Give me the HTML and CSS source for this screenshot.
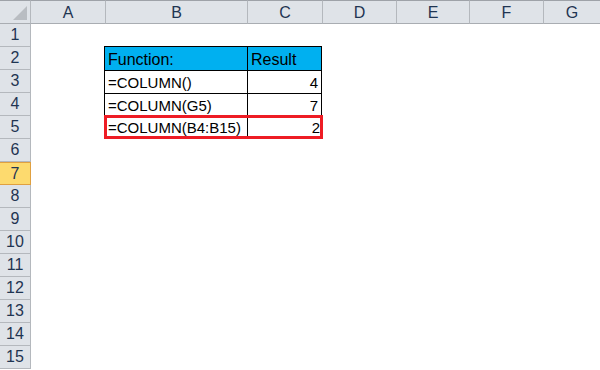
FILE: index.html
```html
<!DOCTYPE html>
<html lang="en">
<head>
    <meta charset="UTF-8">
    <meta name="viewport" content="width=device-width, initial-scale=1.0">
    <title>COLUMN function</title>
    <link rel="stylesheet" href="styles.css">
</head>
<body>
    <div class="sheet">
        <div class="col-head corner"><span class="tri"></span></div>
        <div class="col-head">A</div>
        <div class="col-head">B</div>
        <div class="col-head">C</div>
        <div class="col-head">D</div>
        <div class="col-head">E</div>
        <div class="col-head">F</div>
        <div class="col-head last">G</div>

        <div class="row-num" style="grid-row: 2">1</div>
        <div class="row-num" style="grid-row: 3">2</div>
        <div class="row-num" style="grid-row: 4">3</div>
        <div class="row-num" style="grid-row: 5">4</div>
        <div class="row-num" style="grid-row: 6">5</div>
        <div class="row-num" style="grid-row: 7">6</div>
        <div class="row-num active" style="grid-row: 8">7</div>
        <div class="row-num" style="grid-row: 9">8</div>
        <div class="row-num" style="grid-row: 10">9</div>
        <div class="row-num" style="grid-row: 11">10</div>
        <div class="row-num" style="grid-row: 12">11</div>
        <div class="row-num" style="grid-row: 13">12</div>
        <div class="row-num" style="grid-row: 14">13</div>
        <div class="row-num" style="grid-row: 15">14</div>
        <div class="row-num" style="grid-row: 16">15</div>

        <div class="data">
            <div class="cell head">Function:</div>
            <div class="cell head num-col">Result</div>
            <div class="cell">=COLUMN()</div>
            <div class="cell num-col right">4</div>
            <div class="cell">=COLUMN(G5)</div>
            <div class="cell num-col right">7</div>
            <div class="marked">
                <div class="cell">=COLUMN(B4:B15)</div>
                <div class="cell num-col right">2</div>
            </div>
        </div>
    </div>
</body>
</html>
```

FILE: styles.css
```css
body {
    margin: 0;
    background: #fff;
    font-family: "Liberation Sans", Arial, sans-serif;
}

.sheet {
    display: grid;
    grid-template-columns: 31px 75px 142px 75px 74px 73px 74px 1fr;
    grid-template-rows: 24px repeat(15, 23px);
    width: 600px;
    height: 370px;
    overflow: hidden;
}

.col-head {
    grid-row: 1;
    background: #dfe3e8;
    border-top: 1px solid #9ea2a8;
    border-right: 1px solid #b4b8bd;
    border-bottom: 1px solid #a9adb2;
    box-sizing: border-box;
    display: flex;
    align-items: center;
    justify-content: center;
    color: #1f3552;
    font-size: 16px;
    padding-top: 1px;
}

.col-head.last {
    border-right: none;
}

.corner {
    position: relative;
}

.corner .tri {
    position: absolute;
    right: 3px;
    bottom: 3px;
    width: 0;
    height: 0;
    border-left: 14px solid transparent;
    border-bottom: 14px solid #b9bdc2;
}

.row-num {
    grid-column: 1;
    background: #dfe3e8;
    border-right: 1px solid #b4b8bd;
    border-bottom: 1px solid #b4b8bd;
    box-sizing: border-box;
    display: flex;
    align-items: center;
    justify-content: center;
    color: #1f3552;
    font-size: 16px;
}

.row-num.active {
    background: #fdda6e;
    border: 1px solid #e0a040;
    border-left: none;
}

.data {
    grid-column: 3 / 5;
    grid-row: 3 / 7;
    margin-left: -2px;
    margin-top: -1px;
    display: grid;
    grid-template-columns: 143px 75px;
    grid-template-rows: 24px 23px 23px 23px;
    width: 218px;
    font-size: 15px;
    color: #000;
}

.cell {
    border-left: 1px solid #000;
    border-top: 1px solid #000;
    box-sizing: border-box;
    padding: 0 3px;
    display: flex;
    align-items: flex-end;
    padding-bottom: 2px;
    white-space: nowrap;
}

.cell.num-col {
    border-right: 1px solid #000;
}

.cell.head {
    background: #00b0f0;
    font-size: 16px;
    padding-bottom: 1px;
}

.cell.right {
    justify-content: flex-end;
}

.marked {
    grid-column: 1 / 3;
    display: grid;
    grid-template-columns: 140px 75px;
    border: 3px solid #ee1c24;
    margin-top: -1px;
    height: 24px;
    box-sizing: border-box;
    width: 219px;
}

.marked .cell {
    border-top: none;
    border-left: none;
    padding-bottom: 0;
    padding-left: 1px;
    align-items: center;
}

.marked .cell.num-col {
    border-right: none;
    border-left: 1px solid #000;
    padding-right: 2px;
}
```
